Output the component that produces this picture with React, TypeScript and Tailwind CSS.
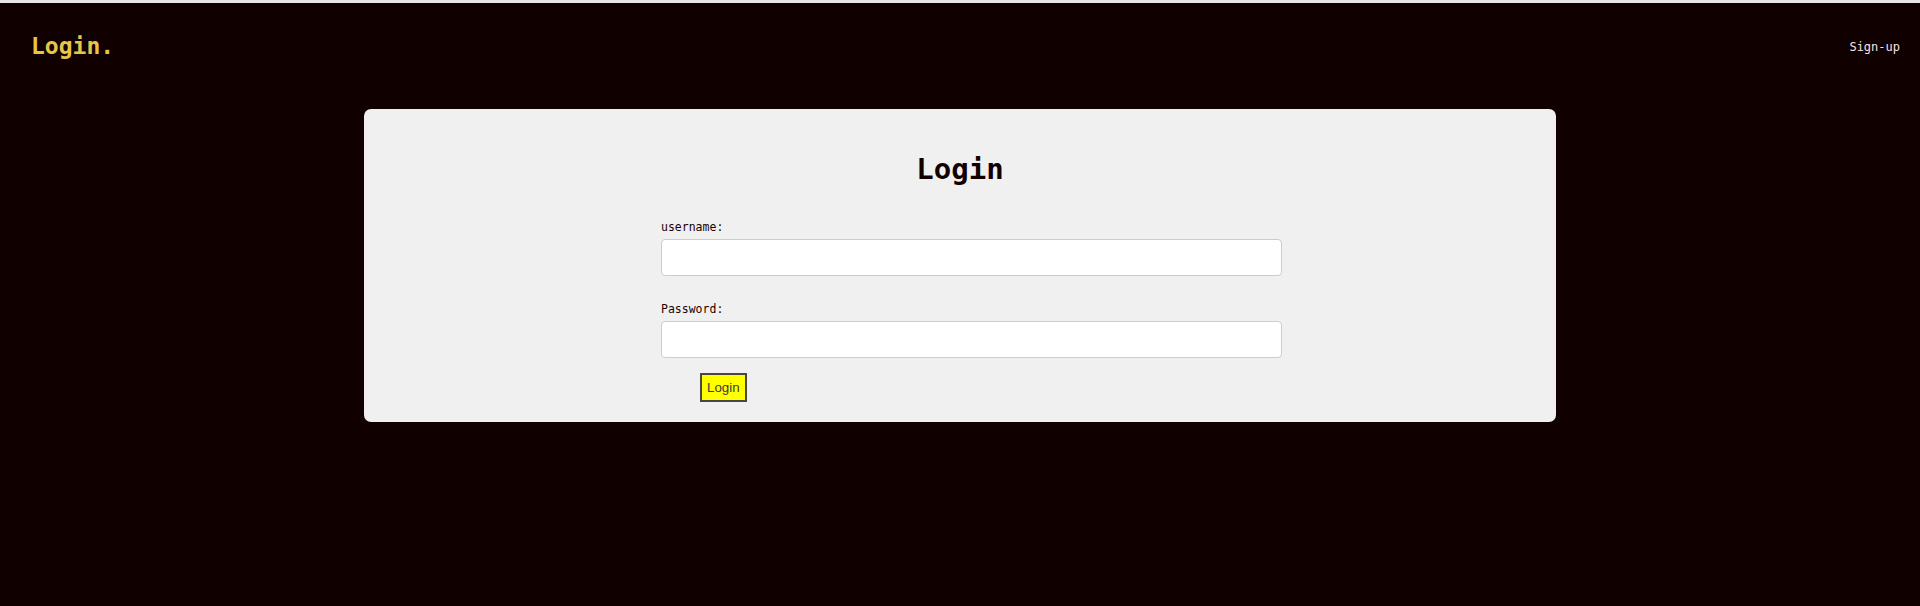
export default function App() {
  const mono = "font-['DejaVu_Sans_Mono','Liberation_Mono',monospace]";

  return (
    <div className={`min-h-screen bg-[#110000] ${mono}`}>
      <div className="h-[3px] bg-[#e6e6e6]" />

      {/* top bar */}
      <header className="flex h-[87px] items-center justify-between pl-[31px] pr-[20px]">
        <span className="text-[23px] font-bold leading-[23px] text-[#e8c547]">Login.</span>
        <a href="#" className="text-[12px] leading-[12px] text-[#f1e4e4]">
          Sign-up
        </a>
      </header>

      <main className="mt-[19px] flex justify-center">
        <div className="w-[1192px] rounded-[7px] bg-[#f0f0f0] pb-[20px] pt-[46px]">
          <h1 className="text-center text-[29px] font-bold leading-[29px] text-[#110000]">Login</h1>

          <form className="ml-[297px] mt-[36px] flex w-[621px] flex-col">
            <label className="text-[11.5px] leading-[14px] text-[#220000]">username:</label>
            <input
              type="text"
              className="mt-[5px] h-[37px] w-full rounded-[4px] border border-[#cccccc] bg-white px-3 outline-none"
            />

            <label className="mt-[26px] text-[11.5px] leading-[14px] text-[#220000]">Password:</label>
            <input
              type="password"
              className="mt-[5px] h-[37px] w-full rounded-[4px] border border-[#cccccc] bg-white px-3 outline-none"
            />

            <div className="mt-[15px] pl-[39px]">
              <button
                type="button"
                className="h-[29px] border-2 border-[#474747] bg-[#ffff00] px-[5px] font-['Liberation_Sans',Arial,sans-serif] text-[13.33px] text-[#3a3a3a]"
              >
                Login
              </button>
            </div>
          </form>
        </div>
      </main>
    </div>
  );
}
